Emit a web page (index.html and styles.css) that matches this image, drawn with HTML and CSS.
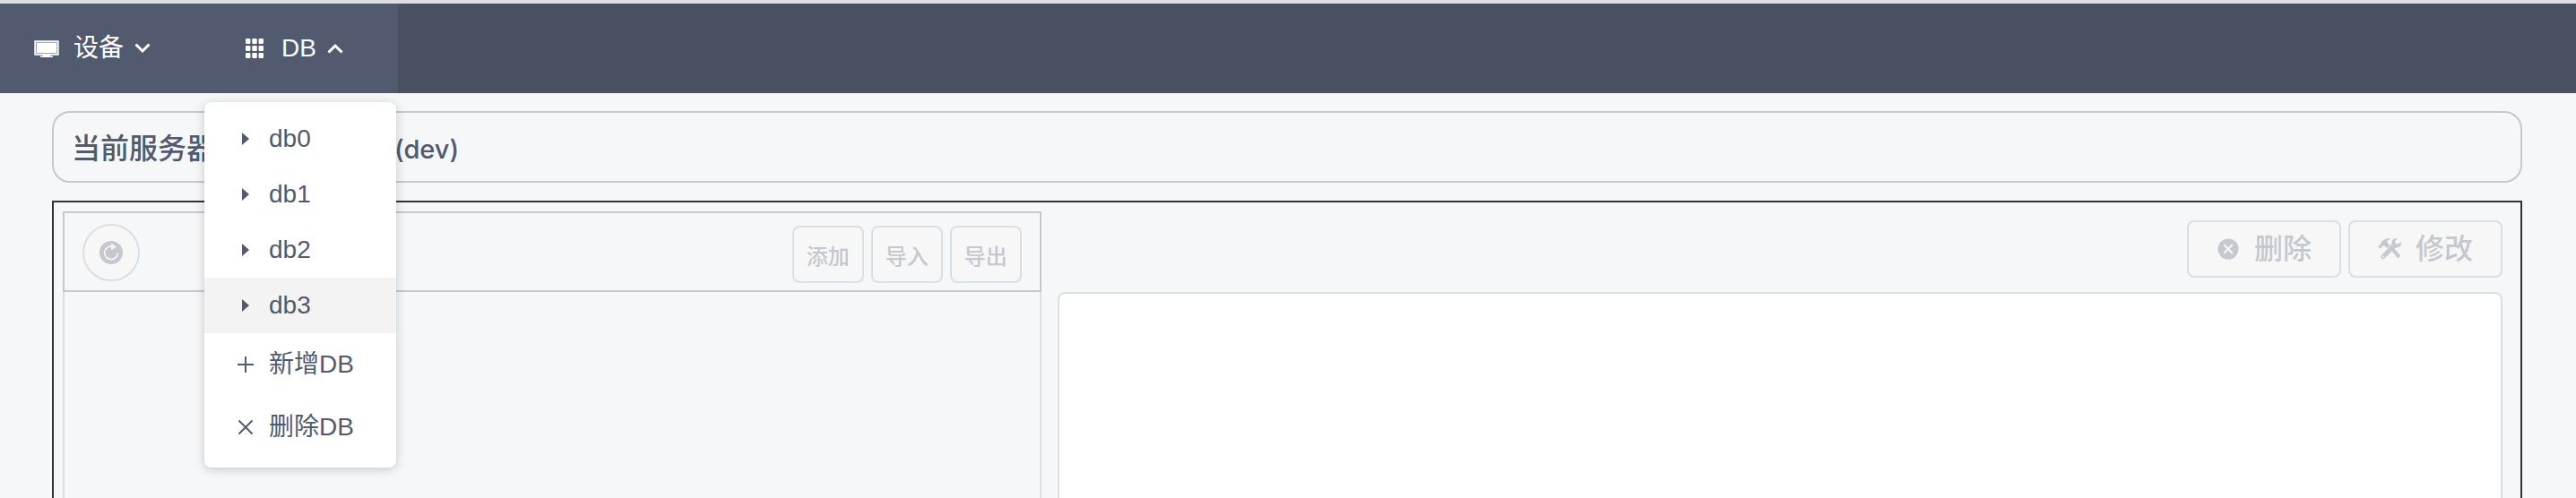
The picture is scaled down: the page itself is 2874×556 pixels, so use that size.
FILE: index.html
```html
<!DOCTYPE html>
<html lang="zh-CN">
<head>
<meta charset="utf-8">
<title>DB</title>
<link rel="stylesheet" href="styles.css">
</head>
<body>
<header class="navbar">
  <nav class="nav-group">
    <button class="nav-item" type="button">
      <svg class="nav-icon" viewBox="0 0 28 28"><path d="M1 6h26v15H1z" fill="#fff" stroke="#fff" stroke-width="1.4"/><path d="M2.400 7.400h23.200v12.200H2.400z" fill="none" stroke="#8d94a3" stroke-width=".9"/><path d="M10 21h8v1.500h3V24H7v-1.500h3z" fill="#fff"/></svg>
      <span class="nav-label">设备</span>
      <svg class="chevron" viewBox="0 0 18 12"><path d="M1.500 1.500 9 9l7.500-7.500"/></svg>
    </button>
    <div class="dropdown">
      <button class="nav-item nav-item-db" type="button" aria-expanded="true">
        <svg class="nav-icon grid-icon" viewBox="0 0 20 22"><g fill="#fff"><rect width="5.400" height="6" rx="1.200"/><rect x="7.300" width="5.400" height="6" rx="1.200"/><rect x="14.600" width="5.400" height="6" rx="1.200"/><rect y="8" width="5.400" height="6" rx="1.200"/><rect x="7.300" y="8" width="5.400" height="6" rx="1.200"/><rect x="14.600" y="8" width="5.400" height="6" rx="1.200"/><rect y="16" width="5.400" height="6" rx="1.200"/><rect x="7.300" y="16" width="5.400" height="6" rx="1.200"/><rect x="14.600" y="16" width="5.400" height="6" rx="1.200"/></g></svg>
        <span class="nav-label">DB</span>
        <svg class="chevron" viewBox="0 0 18 12"><path d="M1.500 10.500 9 3l7.500 7.500"/></svg>
      </button>
      <div class="menu">
        <button class="menu-item" type="button"><svg class="menu-icon" viewBox="0 0 20 20"><path class="solid" d="M6 3v14l8-7z"/></svg>db0</button>
        <button class="menu-item" type="button"><svg class="menu-icon" viewBox="0 0 20 20"><path class="solid" d="M6 3v14l8-7z"/></svg>db1</button>
        <button class="menu-item" type="button"><svg class="menu-icon" viewBox="0 0 20 20"><path class="solid" d="M6 3v14l8-7z"/></svg>db2</button>
        <button class="menu-item active" type="button"><svg class="menu-icon" viewBox="0 0 20 20"><path class="solid" d="M6 3v14l8-7z"/></svg>db3</button>
        <button class="menu-item tall" type="button"><svg class="menu-icon" viewBox="0 0 20 20"><path d="M1 10h18M10 1v18"/></svg>新增DB</button>
        <button class="menu-item tall" type="button"><svg class="menu-icon" viewBox="0 0 20 20"><path d="m2.500 2.500 15 15m0-15-15 15"/></svg>删除DB</button>
      </div>
    </div>
  </nav>
</header>
<main class="page">
  <h1 class="server"><span>当前服务器</span><span class="server-env">(dev)</span></h1>
  <section class="workspace">
    <div class="keys">
      <div class="keys-bar">
        <button class="btn round" type="button" aria-label="刷新" disabled>
          <svg class="refresh-icon" viewBox="0 0 26 26"><circle cx="13" cy="13" r="13" fill="#c5c8ce"/><path d="M20.300 13.500A7.300 7.300 0 1 1 13.500 6" fill="none" stroke="#f7f7f7" stroke-width="1.700"/><path d="M13 2.500v7.500l6-3.200z" fill="#f7f7f7"/></svg>
        </button>
        <div class="btn-row keys-actions">
          <button class="btn small" type="button" disabled>添加</button>
          <button class="btn small" type="button" disabled>导入</button>
          <button class="btn small" type="button" disabled>导出</button>
        </div>
      </div>
      <div class="keys-body"></div>
    </div>
    <div class="value">
      <div class="btn-row value-bar">
        <button class="btn large" type="button" disabled><svg class="btn-icon" viewBox="0 0 26 26"><circle cx="13" cy="13" r="11.500" fill="#c5c8ce"/><path d="m8.300 8.300 9.400 9.400m0-9.400-9.400 9.400" stroke="#f7f7f7" stroke-width="2.200"/></svg>删除</button>
        <button class="btn large" type="button" disabled><svg class="btn-icon" viewBox="0 0 26 26"><path fill="#c5c8ce" d="M0 10.500 3.500 7C4 3.500 8 .8 14 1.300v1C11 2.600 10 4 10.500 5.800l3 3.200-3 3L7.300 9.200l-2 .3-2.500 3.300z"/><path fill="#c5c8ce" d="m15 14.500 2.700-2.500 6.800 7.500c.8.900.3 1.700-.5 2.500s-1.600 1.500-2.500.700z"/><path fill="#c5c8ce" d="M21.500 1.500 19 4.500l.7 2.800 2.800.3L25.500 5c1.200 3.500-1.200 7.500-5.500 6.300L7.500 23.300c-1.200 1.200-2.600 1-3.600.1-1-1-1-2.400.1-3.500L15.500 7.800C14.500 3.500 17.500.500 21.500 1.500z"/><circle cx="5.800" cy="21.500" r="1" fill="#f7f7f7"/></svg>修改</button>
      </div>
      <textarea class="editor" aria-label="值"></textarea>
    </div>
  </section>
</main>
</body>
</html>
```
FILE: styles.css
```css
* { box-sizing: border-box; }

body {
  margin: 0;
  height: 100vh;
  display: flex;
  flex-direction: column;
  overflow: hidden;
  background: #f5f7f9;
  color: #515a6e;
  font-family: "Liberation Sans", "Noto Sans CJK SC", sans-serif;
  font-size: 28px;
}

button { font: inherit; color: inherit; margin: 0; }

.navbar {
  flex: none;
  background: #495060;
  border-top: 4px solid #dcdfe2;
}

.nav-group {
  display: inline-flex;
  vertical-align: top;
  background: #515a6e;
}

.nav-item {
  display: flex;
  align-items: center;
  width: 228px;
  height: 100px;
  padding: 0 0 0 38px;
  border: 0;
  background: none;
  color: #fff;
  line-height: 28px;
}

.nav-item-db { width: 216px; padding-left: 46px; }
.nav-icon { width: 28px; height: 28px; margin-right: 16px; }
.grid-icon { width: 20px; height: 22px; margin-right: 20px; }

.chevron {
  width: 18px;
  height: 12px;
  margin-left: 12px;
  fill: none;
  stroke: #fff;
  stroke-width: 3;
}

.dropdown { position: relative; }

.menu {
  position: absolute;
  z-index: 2;
  top: 110px;
  left: 0;
  width: 214px;
  padding: 10px 0;
  background: #fff;
  border-radius: 8px;
  box-shadow: 0 2px 12px rgba(0, 0, 0, .2);
}

.menu-item {
  display: flex;
  align-items: center;
  width: 100%;
  height: 62px;
  padding: 0 0 0 36px;
  border: 0;
  background: none;
  line-height: 28px;
  white-space: nowrap;
}

.menu-item.tall { height: 70px; }
.menu-item.active { background: #f3f3f3; }

.menu-icon {
  width: 20px;
  height: 20px;
  margin-right: 16px;
  fill: none;
  stroke: #515a6e;
  stroke-width: 2;
}

.menu-icon .solid { fill: #515a6e; stroke: none; }

.page {
  flex: 1;
  display: flex;
  flex-direction: column;
  gap: 20px;
  padding: 20px 60px 0 58px;
}

.server {
  display: flex;
  align-items: baseline;
  gap: 200px;
  height: 80px;
  margin: 0;
  padding: 16px 20px 0;
  border: 2px solid #c5c8ce;
  border-radius: 20px;
  font-size: 32px;
  font-weight: 500;
  line-height: 48px;
}

.server-env { font-family: Inter, sans-serif; font-size: 29px; }

.workspace {
  flex: 1;
  display: flex;
  padding: 10px 10px 0;
  border: 2px solid #323232;
  border-bottom: 0;
}

.keys {
  flex: 0 0 calc(40% - 1px);
  display: flex;
  flex-direction: column;
}

.keys-bar {
  display: flex;
  align-items: flex-start;
  justify-content: space-between;
  height: 90px;
  padding: 12px 20px 0;
  border: 2px solid #c5c8ce;
}

.keys-actions { padding-top: 2px; }

.keys-body {
  flex: 1;
  border: solid #dcdee2;
  border-width: 0 2px;
}

.btn-row { display: flex; gap: 8px; }

.btn {
  display: flex;
  align-items: center;
  justify-content: center;
  height: 64px;
  padding: 0;
  border: 2px solid #dcdee2;
  border-radius: 8px;
  background: #f7f7f7;
  color: #c5c8ce;
  font-weight: 500;
}

.round { width: 64px; border-radius: 50%; }
.refresh-icon { width: 26px; height: 26px; }
.small { width: 80px; font-size: 24px; }
.large { width: 172px; font-size: 32px; line-height: 32px; }
.btn-icon { width: 26px; height: 26px; margin-right: 16px; }

.value {
  flex: 1;
  display: flex;
  flex-direction: column;
  gap: 16px;
  padding: 10px 10px 0 18px;
}

.value-bar { justify-content: flex-end; }

.editor {
  flex: 1;
  width: 100%;
  border: 2px solid #dcdee2;
  border-bottom: 0;
  border-radius: 8px 8px 0 0;
  background: #fff;
  resize: none;
}
```
